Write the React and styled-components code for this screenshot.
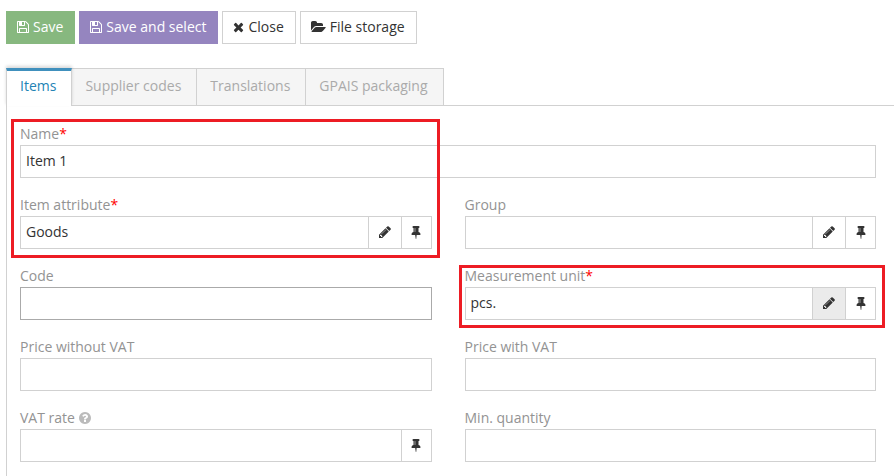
import React, { useState } from 'react'
import styled, { createGlobalStyle } from 'styled-components'

const icons = {
  save: 'M512 1536h768v-384h-768v384zm896 0h128v-896q0-14-10-38.5t-20-34.5l-281-281q-10-10-34-20t-39-10v416q0 40-28 68t-68 28h-576q-40 0-68-28t-28-68v-416h-128v1280h128v-416q0-40 28-68t68-28h832q40 0 68 28t28 68v416zm-384-928v-320q0-13-9.5-22.5t-22.5-9.5h-192q-13 0-22.5 9.5t-9.5 22.5v320q0 13 9.5 22.5t22.5 9.5h192q13 0 22.5-9.5t9.5-22.5zm640 32v928q0 40-28 68t-68 28h-1344q-40 0-68-28t-28-68v-1344q0-40 28-68t68-28h928q40 0 88 20t76 48l280 280q28 28 48 76t20 88z',
  close: 'M1490 1322q0 40-28 68l-136 136q-28 28-68 28t-68-28l-294-294-294 294q-28 28-68 28t-68-28l-136-136q-28-28-28-68t28-68l294-294-294-294q-28-28-28-68t28-68l136-136q28-28 68-28t68 28l294 294 294-294q28-28 68-28t68 28l136 136q28 28 28 68t-28 68l-294 294 294 294q28 28 28 68z',
  folder: 'M1879 952q0 31-31 66l-336 396q-43 51-120.5 86.5t-143.5 35.5h-1088q-34 0-60.5-13t-26.5-43q0-31 31-66l336-396q43-51 120.5-86.5t143.5-35.5h1088q34 0 60.5 13t26.5 43zm-343-344v160h-832q-94 0-197 47.5t-164 119.5l-337 396-5 6q0-4-.5-12.5t-.5-12.5v-960q0-92 66-158t158-66h320q92 0 158 66t66 158v32h544q92 0 158 66t66 158z',
  pencil: 'M491 1536l91-91-235-235-91 91v107h128v128h107zm523-928q0-22-22-22-10 0-17 7l-542 542q-7 7-7 17 0 22 22 22 10 0 17-7l542-542q7-7 7-17zm-54-192l416 416-832 832h-416v-416zm683 96q0 53-37 90l-166 166-416-416 166-165q36-38 90-38 53 0 91 38l235 234q37 39 37 91z',
  pin: 'M800 864v-448q0-14-9-23t-23-9-23 9-9 23v448q0 14 9 23t23 9 23-9 9-23zm672 352q0 26-19 45t-45 19h-429l-51 483q-2 12-10.5 20.5t-20.5 8.5h-1q-27 0-32-27l-76-485h-404q-26 0-45-19t-19-45q0-123 78.5-221.5t177.5-98.5v-512q-52 0-90-38t-38-90 38-90 90-38h640q52 0 90 38t38 90-38 90-90 38v512q99 0 177.5 98.5t78.5 221.5z',
  help: 'M1024 1376v-192q0-14-9-23t-23-9h-192q-14 0-23 9t-9 23v192q0 14 9 23t23 9h192q14 0 23-9t9-23zm256-672q0-88-55.5-163t-138.5-116-170-41q-243 0-371 213-15 24 8 42l132 100q7 6 19 6 16 0 25-12 53-68 86-92 34-24 86-24 48 0 85.5 26t37.5 59q0 38-20 61t-68 45q-63 28-115.5 86.5t-52.5 125.5v36q0 14 9 23t23 9h192q14 0 23-9t9-23q0-19 21.5-49.5t54.5-49.5q32-18 49-28.5t46-35 44.5-48 28-60.5 12.5-81zm384 192q0 209-103 385.5t-279.5 279.5-385.5 103-385.5-103-279.5-279.5-103-385.5 103-385.5 279.5-279.5 385.5-103 385.5 103 279.5 279.5 103 385.5z'
}

// x, y, width, height of each glyph
const boxes = {
  save: '128 0 1536 1792',
  close: '192 0 1408 1792',
  folder: '0 0 1920 1792',
  pencil: '128 0 1536 1792',
  pin: '256 0 1280 1792',
  help: '128 0 1536 1792'
}

const Icon = ({ name }) => (
  <Glyph viewBox={boxes[name]} aria-hidden="true">
    <path d={icons[name]} />
  </Glyph>
)

const tabs = ['Items', 'Supplier codes', 'Translations', 'GPAIS packaging']

const fields = [
  { id: 'name', label: 'Name', value: 'Item 1', required: true, wide: true },
  { id: 'attribute', label: 'Item attribute', value: 'Goods', required: true, edit: true, pin: true },
  { id: 'group', label: 'Group', edit: true, pin: true },
  { id: 'code', label: 'Code', strong: true },
  { id: 'unit', label: 'Measurement unit', value: 'pcs.', required: true, edit: true, pin: true, pressed: true },
  { id: 'priceWithoutVat', label: 'Price without VAT' },
  { id: 'priceWithVat', label: 'Price with VAT' },
  { id: 'vatRate', label: 'VAT rate', help: true, pin: true },
  { id: 'minQuantity', label: 'Min. quantity' }
]

const Field = ({ field }) => {
  const [value, setValue] = useState(field.value || '')

  return (
    <FieldBox $wide={field.wide}>
      <Label htmlFor={field.id}>
        {field.label}
        {field.required && <Required>*</Required>}
        {field.help && <Help><Icon name="help" /></Help>}
      </Label>
      <InputGroup $strong={field.strong}>
        <Input id={field.id} type="text" value={value} onChange={(e) => setValue(e.target.value)} />
        {field.edit && (
          <EditButton type="button" aria-label="Edit" $pressed={field.pressed}>
            <Icon name="pencil" />
          </EditButton>
        )}
        {field.pin && (
          <PinButton type="button" aria-label="Pin">
            <Icon name="pin" />
          </PinButton>
        )}
      </InputGroup>
    </FieldBox>
  )
}

const App = () => {
  const [active, setActive] = useState('Items')

  return (
    <>
      <GlobalStyle />
      <Page>
        <Toolbar>
          <Button type="button" $color="#87b87f"><Icon name="save" />Save</Button>
          <Button type="button" $color="#9585bf"><Icon name="save" />Save and select</Button>
          <Button type="button"><Icon name="close" />Close</Button>
          <Button type="button"><Icon name="folder" />File storage</Button>
        </Toolbar>

        <Tabs role="tablist">
          {tabs.map((tab) => (
            <Tab
              key={tab}
              type="button"
              role="tab"
              aria-selected={tab === active}
              $active={tab === active}
              onClick={() => setActive(tab)}
            >
              {tab}
            </Tab>
          ))}
        </Tabs>

        <Panel>
          <Form>
            {fields.map((field) => <Field key={field.id} field={field} />)}
            <Highlight $area="1 / 1 / 3 / 2" $inset="-6px -8px -9px -9px" />
            <Highlight $area="3 / 2 / 4 / 3" $inset="-2px -9px -8px -6px" />
          </Form>
        </Panel>
      </Page>
    </>
  )
}

export default App

const GlobalStyle = createGlobalStyle`
* {
  box-sizing: border-box;
}
body {
  margin: 0;
  background: #fff;
}
body, button, input {
  font-family: "Open Sans", sans-serif;
  font-size: 14px;
  line-height: 20px;
}
`
const Page = styled.div`
padding: 11px 0 0 6px;
`
const Glyph = styled.svg`
height: 14px;
flex: none;
fill: currentColor;
`
const Toolbar = styled.div`
display: flex;
gap: 4px;
`
const Button = styled.button`
display: flex;
align-items: center;
gap: 4px;
height: 33px;
padding: 0 11px 2px 10px;
border: 1px solid ${({ $color }) => $color || '#d1d1d1'};
background: ${({ $color }) => $color || '#fff'};
color: ${({ $color }) => ($color ? '#fff' : '#333')};
white-space: nowrap;
cursor: pointer;
`
const Tabs = styled.div`
display: flex;
margin-top: 24px;
`
const Tab = styled.button`
height: ${({ $active }) => ($active ? 38 : 37)}px;
padding: 0 15px 2px 13px;
border: 1px solid #d1d1d1;
border-left-width: ${({ $active }) => ($active ? 1 : 0)}px;
border-bottom: 0;
background: #f5f5f5;
color: #aaa;
white-space: nowrap;
cursor: pointer;
${({ $active }) => $active && `
position: relative;
padding-bottom: 6px;
border-top: 3px solid #4090bd;
background: #fff;
color: #2283b5;
box-shadow: 0 -2px 3px rgba(0, 0, 0, 0.15);
`}
`
const Panel = styled.div`
margin-top: -1px;
padding: 19px 18px 14px 13px;
border: 1px solid #d1d1d1;
border-width: 1px 0 0 1px;
`
const Form = styled.form`
position: relative;
display: grid;
grid-template-columns: 1fr 1fr;
gap: 18px 33px;
`
const FieldBox = styled.div`
grid-column: ${({ $wide }) => ($wide ? '1 / -1' : 'auto')};
min-width: 0;
`
const Label = styled.label`
display: flex;
align-items: center;
height: 20px;
padding-bottom: 2px;
color: #939393;
`
const Required = styled.span`
color: #f00;
`
const Help = styled.span`
display: flex;
margin-left: 4px;
color: #bbb;
`
const InputGroup = styled.div`
display: flex;
height: 33px;
border: 1px solid ${({ $strong }) => ($strong ? '#aaa' : '#d1d1d1')};
`
const Input = styled.input`
flex: 1;
min-width: 0;
padding: 0 5px 2px;
border: 0;
outline: 0;
background: #fff;
color: #333;
`
const EditButton = styled.button`
display: flex;
align-items: center;
justify-content: center;
width: 33px;
padding: 0 0 2px;
border: 0;
border-left: 1px solid #d1d1d1;
background: ${({ $pressed }) => ($pressed ? '#ebebeb' : '#fff')};
color: #333;
cursor: pointer;
`
const PinButton = styled(EditButton)`
width: 30px;
`
// red frame laid over the fields that have to be filled in
const Highlight = styled.div`
position: absolute;
grid-area: ${({ $area }) => $area};
inset: ${({ $inset }) => $inset};
border: 3px solid #ed1c24;
pointer-events: none;
`
